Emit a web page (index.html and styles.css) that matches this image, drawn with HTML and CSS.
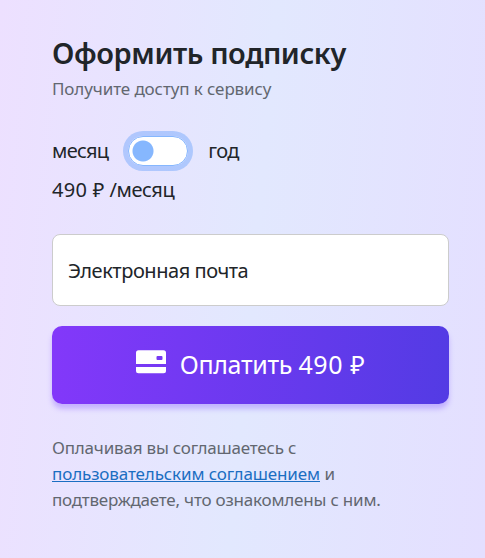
FILE: index.html
```
<!DOCTYPE html>
<html lang="ru">
<head>
  <meta charset="UTF-8">
  <meta name="viewport" content="width=device-width, initial-scale=1.0">
  <title>Оформить подписку</title>
  <link rel="stylesheet" href="styles.css">
</head>
<body>
  <form class="subscribe">
    <h1 class="title">Оформить подписку</h1>
    <p class="subtitle">Получите доступ к сервису</p>

    <div class="period">
      <label class="period-label" for="period">месяц</label>
      <input class="switch" type="checkbox" id="period">
      <label class="period-label" for="period">год</label>
    </div>
    <p class="price"><span class="amount">490 ₽</span> /месяц</p>

    <input class="email" type="email" placeholder="Электронная почта">

    <button class="pay" type="button">
      <svg class="card-icon" width="30" height="24" viewBox="0 0 30 24">
        <path fill="#fff" fill-rule="evenodd" d="M2.500 0.300h25A2.500 2.500 0 0 1 30 2.800V14H0V2.800A2.500 2.500 0 0 1 2.500 0.300zM21.500 6a1 1 0 0 0-1 1v2a1 1 0 0 0 1 1h4a1 1 0 0 0 1-1V7a1 1 0 0 0-1-1z"/>
        <path fill="#fff" d="M0 17h30v3.800a2.500 2.500 0 0 1-2.500 2.500h-25A2.500 2.500 0 0 1 0 20.800z"/>
      </svg>
      <span class="pay-text">Оплатить <span class="pay-amount">490 ₽</span></span>
    </button>

    <p class="terms">
      <span class="terms-text">Оплачивая вы соглашаетесь с</span><br>
      <a class="link" href="#">пользовательским соглашением</a> и<br>
      <span class="terms-text">подтверждаете, что ознакомлены с ним.</span>
    </p>
  </form>
</body>
</html>
```
FILE: styles.css
```
* {
  box-sizing: border-box;
}

body {
  margin: 0;
  min-height: 558px;
  font-family: "Noto Sans", sans-serif;
  font-size: 20px;
  color: #212529;
  background: linear-gradient(95deg, #ede0ff 0%, #e2e8fe 52%, #e4dfff 100%);
}

.subscribe {
  padding: 33px 36px 0 52px;
}

.title {
  margin: 0;
  font-size: 29px;
  font-weight: 600;
  line-height: 40px;
  letter-spacing: -0.4px;
}

.subtitle {
  margin: 3px 0 0;
  font-size: 17px;
  line-height: 26px;
  letter-spacing: -0.1px;
  color: #626770;
}

.period {
  display: flex;
  align-items: center;
  height: 40px;
  margin-top: 29px;
}

.period-label {
  padding-bottom: 2px;
  letter-spacing: -0.7px;
}

.switch {
  appearance: none;
  width: 60px;
  height: 30px;
  margin: 0 20px;
  border: 1px solid #86b7fe;
  border-radius: 30px;
  background: radial-gradient(circle at 14px 14px, #86b7fe 10px, #fff 11px);
  box-shadow: 0 0 0 5px rgba(13, 110, 253, 0.25);
}

.price {
  margin: 4px 0 0;
  line-height: 30px;
  letter-spacing: -0.4px;
}

.amount {
  letter-spacing: 0.3px;
}

.email {
  display: block;
  width: 100%;
  height: 72px;
  margin-top: 29px;
  padding: 0 15px;
  border: 1px solid #ccc;
  border-radius: 8px;
  font: inherit;
  letter-spacing: -0.45px;
  background: #fff;
}

.email::placeholder {
  color: #212529;
  opacity: 1;
}

.pay {
  display: flex;
  justify-content: center;
  align-items: center;
  gap: 14px;
  width: 100%;
  height: 78px;
  margin-top: 20px;
  padding: 0;
  border: 0;
  border-radius: 10px;
  font: inherit;
  font-size: 25px;
  color: #fff;
  background: linear-gradient(95deg, #8338fa, #533be4);
  box-shadow: 0 5px 5px rgba(131, 86, 255, 0.35);
}

.card-icon {
  margin-bottom: 6px;
}

.pay-text {
  padding-bottom: 2px;
  letter-spacing: -0.3px;
}

.pay-amount {
  letter-spacing: 0.6px;
}

.terms {
  margin: 31px 0 0;
  font-size: 17px;
  line-height: 26px;
  color: #626770;
  white-space: nowrap;
}

.terms-text {
  letter-spacing: -0.2px;
}

.link {
  color: #1b6ec2;
  letter-spacing: -0.12px;
}
```
